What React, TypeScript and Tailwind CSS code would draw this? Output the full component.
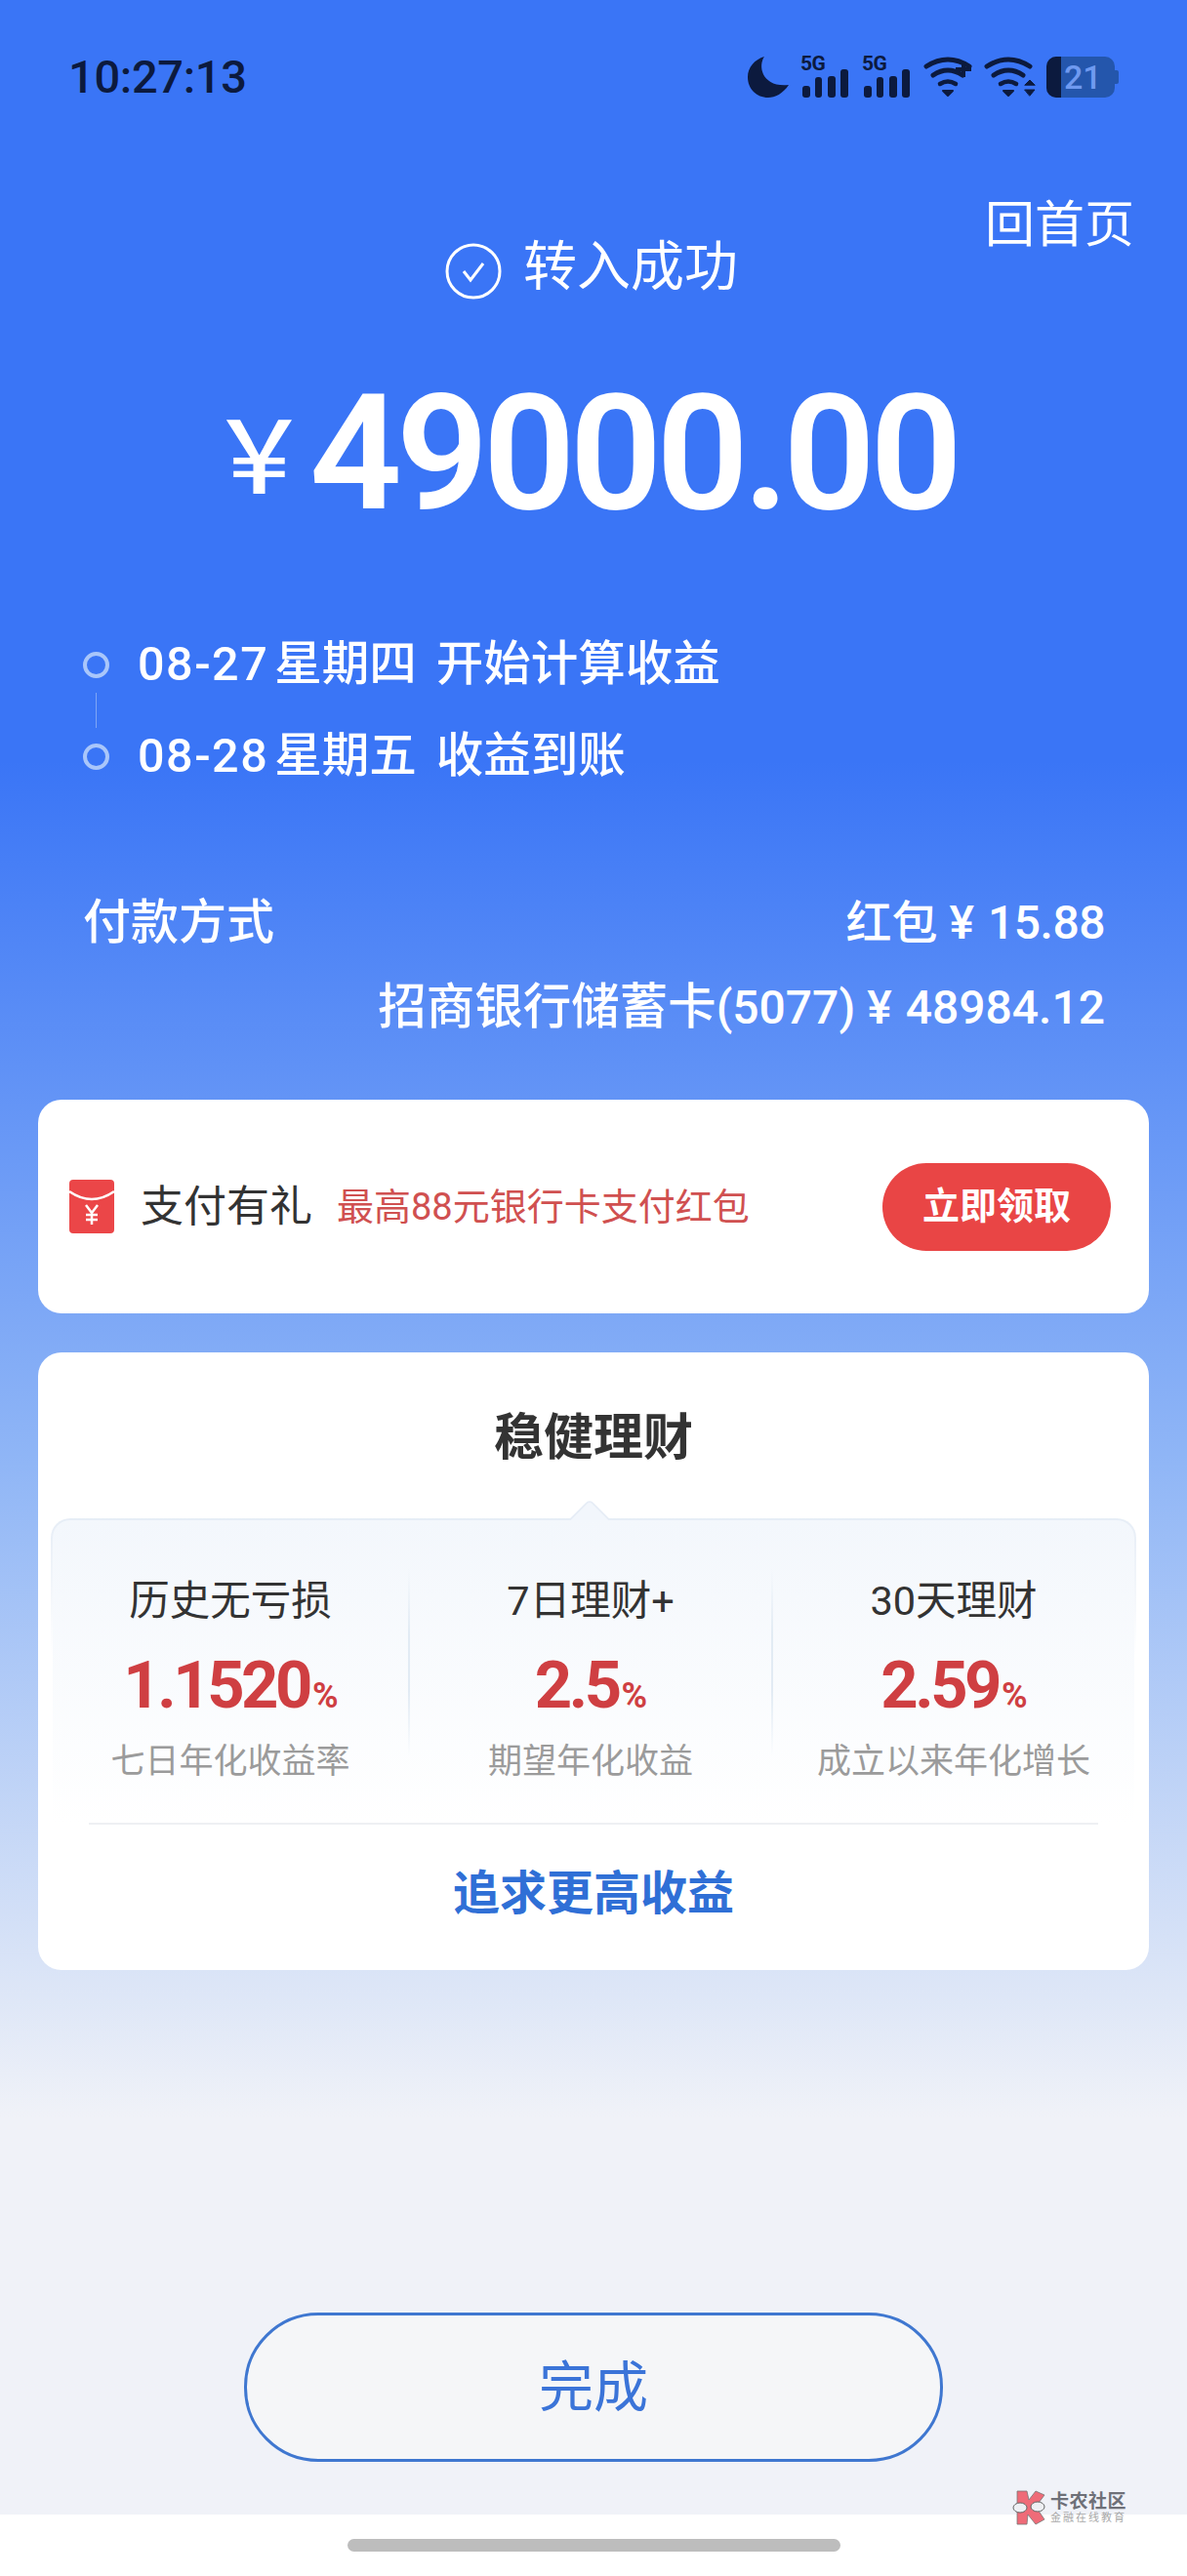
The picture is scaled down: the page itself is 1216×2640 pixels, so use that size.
import React from "react";

const dark = "#0c1a3e";

function Signal() {
  return (
    <div className="relative w-[49px] h-[43px]">
      <svg width="49" height="43" viewBox="0 0 49 43" fill={dark}>
        <rect x="2" y="30" width="8" height="12" rx="3" />
        <rect x="15" y="21" width="7" height="21" rx="3" />
        <rect x="28" y="20" width="8" height="22" rx="3" />
        <rect x="41" y="13" width="8" height="29" rx="3" />
      </svg>
      <span className="absolute left-0 top-[-4px] text-[21px] leading-[22px] font-bold text-[#0c1a3e] font-['Roboto',sans-serif] tracking-[-0.5px]">5G</span>
    </div>
  );
}

function Wifi({ plus }: { plus?: boolean }) {
  return (
    <svg width="54" height="44" viewBox="0 0 54 44" fill="none" stroke={dark} strokeLinecap="round">
      <path d="M3 11 Q 25 -3 47 11" strokeWidth="5" />
      <path d="M10 20 Q 25 10 40 20" strokeWidth="5" />
      <path d="M17 29 Q 25 24 33 29" strokeWidth="4.5" />
      <path d="M20 36 L30 36 L25 41 Z" fill={dark} stroke={dark} strokeWidth="2" strokeLinejoin="round" />
      {plus ? (
        <path d="M41 6 V22 M33 14 H49" strokeWidth="4" strokeLinecap="butt" />
      ) : (
        <path d="M42 30 L47 25 L52 30 Z M42 35 L52 35 L47 41 Z" fill={dark} strokeWidth="1" />
      )}
    </svg>
  );
}

function StatusBar() {
  return (
    <div className="flex items-center justify-between h-[158px] pl-[70px] pr-[70px]">
      <span className="text-[47px] leading-[50px] font-medium text-[#0c1a3e] font-['Roboto',sans-serif] tracking-[-0.3px]">10:27:13</span>
      <div className="flex items-center gap-[12px]">
        <svg width="42" height="42" viewBox="0 0 42 42" fill={dark}>
          <path d="M17 0 C 10 10 15 32 42 29 C 36 38 28 42 21 42 C 9 42 0 33 0 21 C 0 11 7 3 17 0 Z" />
        </svg>
        <Signal />
        <div className="ml-[2px]"><Signal /></div>
        <div className="ml-[2px]"><Wifi plus /></div>
        <div className="-ml-[4px]"><Wifi /></div>
        <div className="flex items-center -ml-[2px]">
          <div className="w-[70px] h-[42px] rounded-[10px] bg-[#2456ac] overflow-hidden flex">
            <div className="w-[15px] h-full bg-[#0c1a3e]" />
            <span className="pl-[3px] text-[34px] leading-[42px] font-medium text-[#6f9af0] font-['Roboto',sans-serif]">21</span>
          </div>
          <div className="w-[4px] h-[14px] bg-[#2456ac] rounded-r-[2px]" />
        </div>
      </div>
    </div>
  );
}

function Metric({ label, value, sub }: { label: string; value: string; sub: string }) {
  return (
    <div className="flex flex-col items-center">
      <div className="mt-[3px] text-[41.5px] leading-[60px] text-[#333333]">{label}</div>
      <div className="mt-[16px] flex items-baseline font-bold text-[#cf3f42] h-[80px] leading-[80px]">
        <span className="text-[67px] tracking-[-3.5px]">{value}</span>
        <span className="text-[36px] tracking-[-1px] ml-[3px]">%</span>
      </div>
      <div className="mt-[14px] text-[35px] leading-[50px] text-[#9b9b9b]">{sub}</div>
    </div>
  );
}

function Divider() {
  return <div className="w-[2px] h-[192px] bg-[linear-gradient(180deg,transparent,#e2ebf4_35%,#e2ebf4_65%,transparent)]" />;
}

export default function App() {
  return (
    <div className="w-[1216px] h-[2640px] flex flex-col bg-white relative overflow-hidden font-['Roboto','Noto_Sans_CJK_SC',sans-serif]">
      <main className="h-[2577px] flex flex-col bg-[linear-gradient(180deg,#3a75f6_0px,#3a75f6_780px,#90b6f6_1500px,#dde6f7_2040px,#f0f2f8_2170px)]">
        <StatusBar />

        <div className="grid grid-cols-[1fr_auto_1fr] h-[150px] pr-[54px]">
          <div />
          <div className="flex items-center gap-[22px] h-[62px] mt-[84px] ml-[50px] self-start">
            <svg width="58" height="58" viewBox="0 0 58 58" fill="none" stroke="white" className="mt-[10px]">
              <circle cx="29" cy="29" r="27" strokeWidth="3" />
              <path d="M19 29 L26 38 L39 21" strokeWidth="3" />
            </svg>
            <span className="text-[55px] leading-[62px] text-white">转入成功</span>
          </div>
          <div className="justify-self-end self-start text-[51px] leading-[60px] text-white mt-[43px]">回首页</div>
        </div>

        <div className="flex items-center h-[170px] text-white mt-[70px] pl-[214px]">
          <span className="text-[103px] leading-[170px] font-medium -mt-[2px] font-['Noto_Sans_CJK_SC',sans-serif]">￥</span>
          <span className="ml-[0px] text-[166px] leading-[170px] font-semibold tracking-[-6px] mt-[4px]">49000.00</span>
        </div>

        <div className="flex flex-col mt-[103px] pl-[85px]">
          <div className="flex items-center h-[60px]">
            <span className="w-[27px] h-[27px] rounded-full border-[4px] border-[#a9c6fa]" />
            <span className="ml-[29px] text-[48.5px] leading-[60px] text-white font-medium"><span className="tracking-[1.5px]">08-27</span><span className="ml-[6px]">星期四</span><span className="ml-[20px]">开始计算收益</span></span>
          </div>
          <div className="ml-[13px] w-px h-[36px] -my-[1px] bg-[#7fa6f5]" />
          <div className="flex items-center h-[60px]">
            <span className="w-[27px] h-[27px] rounded-full border-[4px] border-[#a9c6fa]" />
            <span className="ml-[29px] text-[48.5px] leading-[60px] text-white font-medium"><span className="tracking-[1.5px]">08-28</span><span className="ml-[6px]">星期五</span><span className="ml-[20px]">收益到账</span></span>
          </div>
        </div>

        <div className="flex flex-col mt-[111px] pl-[85px] pr-[84px] text-white font-medium">
          <div className="flex items-center justify-between h-[60px] text-[48px] leading-[60px]">
            <span className="text-[49px]">付款方式</span>
            <span><span className="text-[47px]">红包</span><span className="ml-[12px]">¥</span><span className="ml-[14px] tracking-[-0.5px]">15.88</span></span>
          </div>
          <div className="mt-[26px] h-[60px] text-right text-[48px] leading-[60px]"><span className="text-[49.5px]">招商银行储蓄卡</span>(5077)<span className="ml-[12px]">¥</span><span className="ml-[14px]">48984.12</span></div>
        </div>

        <div className="mx-[39px] mt-[65px] h-[219px] rounded-[24px] bg-white flex items-center justify-between pl-[32px] pr-[39px]">
          <div className="flex items-center">
            <svg width="46" height="55" viewBox="0 0 46 55">
              <path d="M4 0 H42 Q46 0 46 4 V51 Q46 55 42 55 H4 Q0 55 0 51 V4 Q0 0 4 0 Z" fill="#eb4648" />
              <path d="M0 12 Q23 28 46 12" fill="none" stroke="white" strokeWidth="2.5" />
              <path d="M17 26 L23 34 L29 26 M23 34 V46 M17 36 H29 M17 41 H29" fill="none" stroke="white" strokeWidth="2.5" />
            </svg>
            <span className="ml-[27px] text-[44px] leading-[60px] text-[#333333]">支付有礼</span>
            <span className="ml-[25px] text-[38px] leading-[60px] text-[#d05050]">最高88元银行卡支付红包</span>
          </div>
          <button className="w-[234px] h-[90px] rounded-full bg-[#e94545] text-white text-[38px] font-bold">立即领取</button>
        </div>

        <div className="mx-[39px] mt-[40px] h-[633px] rounded-[24px] bg-white flex flex-col px-[13px]">
          <div className="h-[170px] pt-[52px] text-center text-[51px] leading-[72px] font-bold text-[#333333]">稳健理财</div>
          <div className="relative h-[312px] rounded-t-[20px] pt-[2px] px-[2px] bg-[linear-gradient(180deg,#e6edf6_0%,#ffffff_45%)]">
            <div className="absolute left-[537px] -top-[14px] w-[30px] h-[30px] rotate-45 bg-[#f2f6fc] rounded-tl-[6px] border-l-2 border-t-2 border-[#e6edf6]" />
            <div className="relative h-full rounded-t-[18px] bg-[linear-gradient(180deg,#f3f7fc_0%,#ffffff_100%)] grid grid-cols-[364px_2px_370px_2px_1fr] pt-[50px]">
              <Metric label="历史无亏损" value="1.1520" sub="七日年化收益率" />
              <Divider />
              <Metric label="7日理财+" value="2.5" sub="期望年化收益" />
              <Divider />
              <Metric label="30天理财" value="2.59" sub="成立以来年化增长" />
            </div>
          </div>
          <div className="mx-[39px] h-[2px] bg-[#eef0f3]" />
          <div className="flex-1 flex items-center justify-center text-[48px] font-bold text-[#2f6fd6] pb-[8px]">追求更高收益</div>
        </div>

        <div className="flex justify-center mt-[351px]">
          <button className="w-[716px] h-[153px] rounded-[76px] border-[3px] border-[#3f77d0] bg-[#f5f6f8] text-[56px] text-[#3b74d8]">完成</button>
        </div>
      </main>

      <div className="flex-1 flex justify-center pt-[25px]">
        <div className="w-[505px] h-[13px] rounded-full bg-[#bdbdbd]" />
      </div>

      <div className="absolute left-[1037px] top-[2552px] flex items-start gap-[5px]">
        <svg width="34" height="36" viewBox="0 0 34 36">
          <path d="M5 1 L15 1 L17 10 L24 1 L33 5 L24 17 L33 30 L24 35 L16 25 L15 35 L5 35 Z" fill="#ef6b78" stroke="#777" strokeWidth="0.8" />
          <ellipse cx="8" cy="18" rx="7" ry="5" fill="#eef0f4" stroke="#666" strokeWidth="1" />
          <ellipse cx="26" cy="17" rx="7" ry="5" fill="#eef0f4" stroke="#666" strokeWidth="1" />
        </svg>
        <div className="flex flex-col pt-[1px]">
          <span className="text-[19px] leading-[21px] font-bold text-[#6e7078] tracking-[0.5px] whitespace-nowrap">卡农社区</span>
          <span className="text-[11px] leading-[14px] text-[#a8a8a8] tracking-[2px] whitespace-nowrap">金融在线教育</span>
        </div>
      </div>
    </div>
  );
}
